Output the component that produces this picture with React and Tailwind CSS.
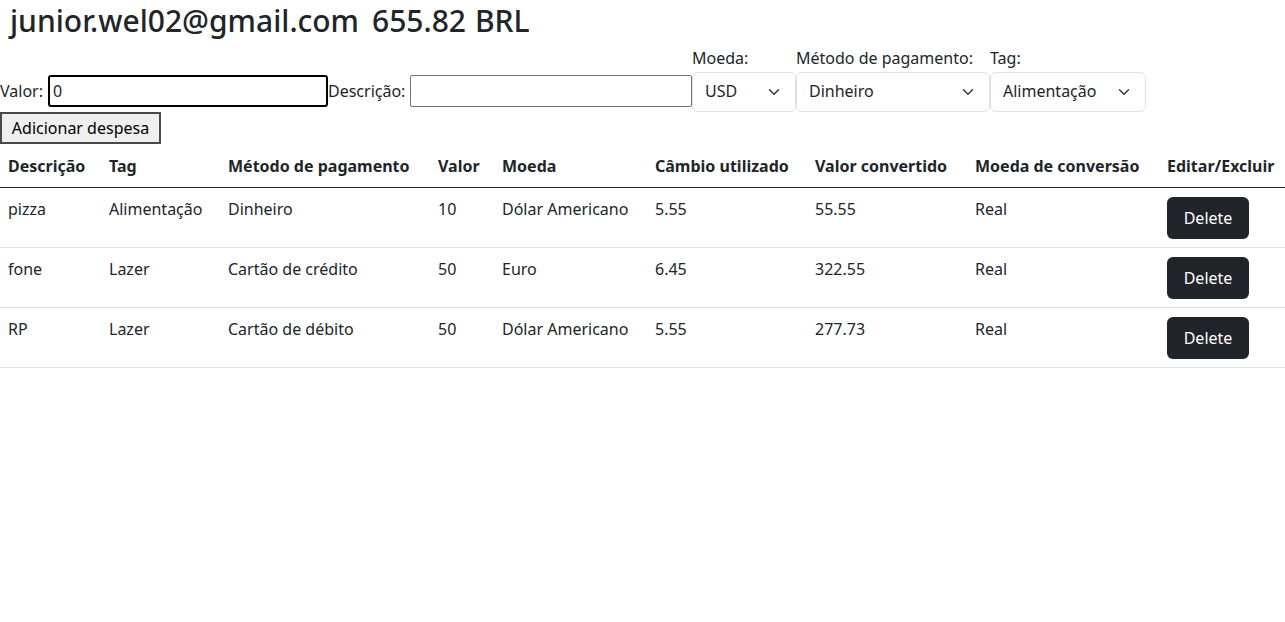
import React from "react";

const Chevron = () => (
  <svg
    className="pointer-events-none absolute right-[16px] top-1/2 -translate-y-1/2"
    width="12"
    height="12"
    viewBox="0 0 16 16"
    fill="none"
  >
    <path d="m2 5 6 6 6-6" stroke="#343a40" strokeWidth="2" strokeLinecap="round" strokeLinejoin="round" />
  </svg>
);

const SelectField = ({ label, width, options }) => (
  <label className="flex flex-col">
    <span className="h-[24px] leading-[24px] mb-[2px] whitespace-nowrap">{label}</span>
    <span className={`relative block ${width}`}>
      <select
        defaultValue={options[0]}
        className="appearance-none w-full h-[40px] border border-[#dee2e6] rounded-[6px] bg-white pl-[12px] pr-[36px] pb-[3px] text-[16px] leading-[24px] text-[#212529] outline-none"
      >
        {options.map((o) => (
          <option key={o}>{o}</option>
        ))}
      </select>
      <Chevron />
    </span>
  </label>
);

const rows = [
  ["pizza", "Alimentação", "Dinheiro", "10", "Dólar Americano", "5.55", "55.55", "Real"],
  ["fone", "Lazer", "Cartão de crédito", "50", "Euro", "6.45", "322.55", "Real"],
  ["RP", "Lazer", "Cartão de débito", "50", "Dólar Americano", "5.55", "277.73", "Real"],
];

const headers = [
  "Descrição",
  "Tag",
  "Método de pagamento",
  "Valor",
  "Moeda",
  "Câmbio utilizado",
  "Valor convertido",
  "Moeda de conversão",
  "Editar/Excluir",
];

export default function App() {
  return (
    <div
      className="min-h-[622px] bg-white text-[#212529] text-[16px] leading-[24px] overflow-hidden"
      style={{ fontFamily: '"Noto Sans", "Open Sans", sans-serif' }}
    >
      <header className="flex pl-[10px] mb-[5px]">
        <h2 className="text-[30px] leading-[41px] font-medium whitespace-nowrap">
          <span>junior.wel02@gmail.com</span>
          <span className="ml-[13px]">655.82</span>
          <span className="ml-[9px]">BRL</span>
        </h2>
      </header>

      <form className="flex items-end" onSubmit={(e) => e.preventDefault()}>
        <div className="flex items-center mb-[5px]">
          <label htmlFor="valor" className="w-[47px] whitespace-nowrap">Valor:</label>
          <input
            id="valor"
            type="text"
            defaultValue="0"
            className="ml-[1px] w-[280px] h-[32px] border-2 border-black rounded-[3px] px-[3px] text-[16px] outline-none"
          />
          <label htmlFor="desc" className="w-[82px] whitespace-nowrap">Descrição:</label>
          <input
            id="desc"
            type="text"
            className="w-[282px] h-[32px] border border-[#767676] rounded-[2px] px-[3px] text-[16px] outline-none"
          />
        </div>
        <SelectField label="Moeda:" width="w-[104px]" options={["USD"]} />
        <SelectField label="Método de pagamento:" width="w-[194px]" options={["Dinheiro", "Cartão de crédito", "Cartão de débito"]} />
        <SelectField label="Tag:" width="w-[156px]" options={["Alimentação", "Lazer", "Trabalho", "Transporte", "Saúde"]} />
      </form>

      <button
        type="button"
        className="block h-[32px] w-[161px] bg-[#efefef] border-2 border-[#4a4a4a] text-[16px] leading-[24px] text-black whitespace-nowrap"
      >
        Adicionar despesa
      </button>

      <table className="mt-[4px] w-[1285px] table-fixed border-collapse">
        <colgroup>
          <col className="w-[101px]" />
          <col className="w-[119px]" />
          <col className="w-[210px]" />
          <col className="w-[64px]" />
          <col className="w-[153px]" />
          <col className="w-[160px]" />
          <col className="w-[160px]" />
          <col className="w-[192px]" />
          <col className="w-[126px]" />
        </colgroup>
        <thead>
          <tr className="border-b border-[#212529]">
            {headers.map((h) => (
              <th key={h} className="text-left font-bold px-[8px] pt-[6px] pb-[9px] whitespace-nowrap">
                {h}
              </th>
            ))}
          </tr>
        </thead>
        <tbody>
          {rows.map((r, i) => (
            <tr key={i} className="border-b border-[#dee2e6]">
              {r.map((c, j) => (
                <td key={j} className="align-top px-[8px] pt-[9px] pb-[7px] whitespace-nowrap">
                  {c}
                </td>
              ))}
              <td className="align-top px-[8px] pt-[9px] pb-[8px]">
                <button
                  type="button"
                  className="h-[42px] w-[82px] rounded-[6px] bg-[#212529] text-white text-[16px]"
                >
                  Delete
                </button>
              </td>
            </tr>
          ))}
        </tbody>
      </table>
    </div>
  );
}
